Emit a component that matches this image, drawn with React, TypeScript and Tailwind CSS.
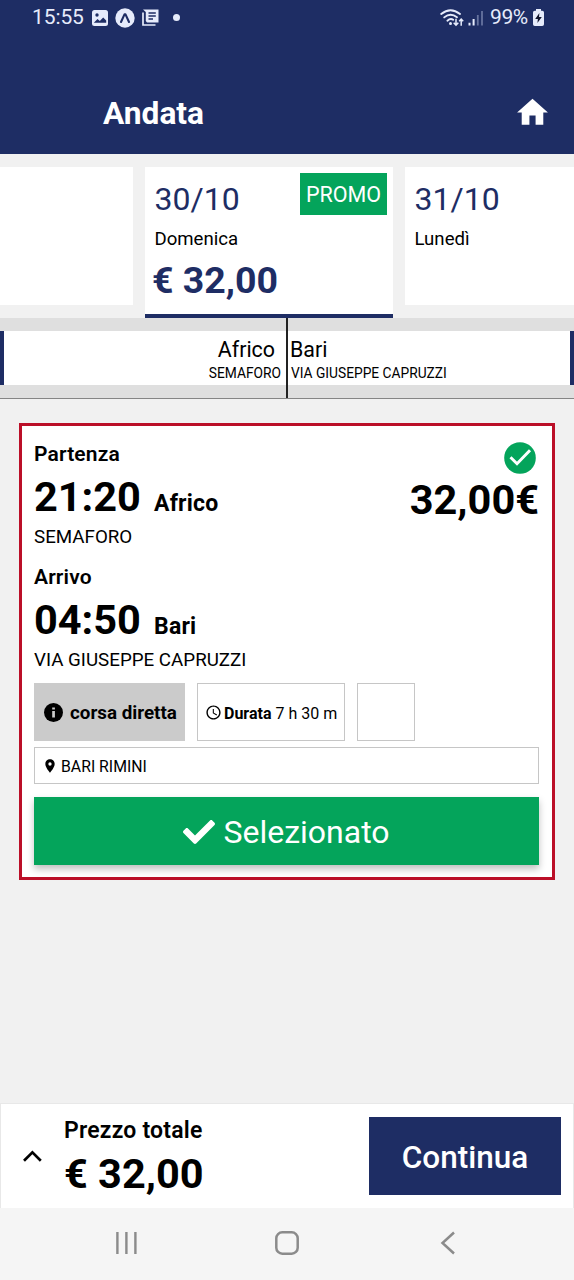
import type { ReactNode } from "react";
import { FaCheck } from "react-icons/fa";
import { MdAccessTime, MdHome, MdLocationOn } from "react-icons/md";

function StatusBar() {
  return (
    <div className="flex h-[35px] items-center pl-[32px] pr-[30px] text-[#e6ebfb]">
      <span className="w-[60px] text-[21px] leading-[35px] tracking-[-0.1px]">15:55</span>
      <svg className="h-[16px] w-[16px] shrink-0" viewBox="0 0 16 16">
        <rect width="16" height="16" rx="2.5" fill="currentColor" />
        <circle cx="5" cy="5" r="1.7" fill="#1e2d64" />
        <path d="M1.8 12.8 5.5 9l2.3 2 3.4-3.6 3 3.2v2.2z" fill="#1e2d64" />
      </svg>
      <svg className="ml-[7px] h-[20px] w-[20px] shrink-0" viewBox="0 0 20 20">
        <circle cx="10" cy="10" r="9.7" fill="currentColor" />
        <path d="M6 14 9.5 6.4h1L14 14" fill="none" stroke="#1e2d64" strokeWidth="2.1" strokeLinecap="round" strokeLinejoin="round" />
      </svg>
      <svg className="ml-[7px] h-[17px] w-[17px] shrink-0" viewBox="0 0 17 17">
        <path d="M1 3.5V16h12.5" fill="none" stroke="currentColor" strokeWidth="1.7" />
        <path d="M1 .5h15.5v13H5L3.8 12V3z" fill="currentColor" />
        <path d="M6.5 4h7.3M6.5 7h7.3M6.5 10h4.5" stroke="#1e2d64" strokeWidth="1.4" />
      </svg>
      <span className="ml-[14px] h-[7px] w-[7px] rounded-full bg-[#e6ebfb]" />
      <svg className="ml-auto h-[18px] w-[24px] shrink-0" viewBox="0 0 24 18">
        <g fill="none" stroke="currentColor" strokeWidth="1.9" strokeLinecap="round">
          <path d="M1.2 5Q10.5-2.6 20 5" />
          <path d="M4.2 8.4Q10.5 3 17 8.2" />
          <path d="M7.4 11.7Q10.5 9 13.2 10.8" />
        </g>
        <circle cx="10.5" cy="14.4" r="1.5" fill="currentColor" />
        <path d="M16 9.7V16m-2.3-2.2L16 16.2l2.3-2.4M21.2 16.7v-6.5m-2 2 2-2.2 2 2.2" fill="none" stroke="currentColor" strokeWidth="1.5" />
      </svg>
      <svg className="ml-[4px] h-[16px] w-[16px] shrink-0" viewBox="0 0 16 16">
        <path d="M1.5 15.5v-2.7M5.6 15.5V9" stroke="currentColor" strokeWidth="2" />
        <path d="M9.8 15.5V5M14 15.5V1" stroke="#66739f" strokeWidth="1.8" />
      </svg>
      <span className="ml-[6px] w-[41px] whitespace-nowrap text-[21px] leading-[35px] tracking-[-0.4px]">99%</span>
      <svg className="ml-[2px] h-[17px] w-[11px] shrink-0" viewBox="0 0 11 17">
        <path d="M3 0h5v1.8h1.3Q11 1.8 11 3.5v11.7q0 1.8-1.8 1.8H1.8Q0 17 0 15.2V3.5q0-1.7 1.7-1.7H3z" fill="currentColor" />
        <path d="M6.4 4 2.2 10h2.7l-.5 4 4.4-6H6z" fill="#10142b" />
      </svg>
    </div>
  );
}

function DayCard({ date, day, children, className }: { date: string; day: string; children?: ReactNode; className: string }) {
  return (
    <div className={`shrink-0 bg-white whitespace-nowrap ${className}`}>
      <div className="h-[48px] pt-[12px] text-[32px] leading-[40px] text-[#1e2d64]">{date}</div>
      <div className="mt-[12px] text-[18.6px] leading-[24px]">{day}</div>
      {children}
    </div>
  );
}

function Stop({ label, time, city, place }: { label: string; time: string; city: string; place: string }) {
  return (
    <div className="h-[123px] whitespace-nowrap">
      <div className="text-[21px] leading-[24px] font-semibold tracking-[0.15px]">{label}</div>
      <div className="mt-[6px] flex items-baseline">
        <span className="w-[120px] text-[41.5px] leading-[50px] font-bold">{time}</span>
        <span className="text-[23px] font-bold tracking-[0.2px]">{city}</span>
      </div>
      <div className="mt-[3px] text-[18.75px] leading-[25px]">{place}</div>
    </div>
  );
}

export default function App() {
  return (
    <div className="flex h-[1280px] w-[574px] flex-col overflow-hidden bg-[#f1f1f1] font-['Roboto',sans-serif] text-black">
      <header className="h-[154px] shrink-0 bg-[#1e2d64]">
        <StatusBar />
        <div className="mt-[53px] flex h-[50px] items-center justify-between pr-[23px] pl-[103px]">
          <h1 className="pt-[2px] text-[31.7px] leading-[50px] font-bold text-white">Andata</h1>
          <MdHome className="mb-[2px] h-[37px] w-[37px] text-white" />
        </div>
      </header>

      <section className="flex h-[164px] shrink-0 items-start gap-[12px] overflow-hidden pt-[13px]">
        <div className="h-[138px] w-[133px] shrink-0 bg-white" />
        <div className="relative shrink-0">
          <DayCard date="30/10" day="Domenica" className="h-[151px] w-[248px] border-b-[4px] border-[#1e2d64] pl-[9.5px]">
            <div className="-ml-[2.5px] mt-[6px] text-[37.5px] leading-[46px] font-bold text-[#1e2d64]">€ 32,00</div>
          </DayCard>
          <span className="absolute top-[6px] right-[6px] h-[42px] w-[87px] bg-[#04a45b] text-center text-[21.5px] leading-[43px] text-white">
            PROMO
          </span>
        </div>
        <DayCard date="31/10" day="Lunedì" className="h-[138px] w-[248px] pl-[9.5px]" />
      </section>

      <section className="flex h-[81px] shrink-0 border-b border-[#858585] bg-[#dfdfdf] whitespace-nowrap">
        <div className="flex w-[288px] border-r-2 border-[#222] py-[13px]">
          <div className="flex-1 border-l-[4px] border-[#1e2d64] bg-white pt-[6px] text-right">
            <div className="pr-[11px] text-[21.4px] leading-[26px]">Africo</div>
            <div className="pr-[5px] text-[13.8px] leading-[20px]">SEMAFORO</div>
          </div>
        </div>
        <div className="flex flex-1 py-[13px]">
          <div className="flex-1 border-r-[4px] border-[#1e2d64] bg-white pt-[6px] pl-[2px]">
            <div className="text-[21.4px] leading-[26px]">Bari</div>
            <div className="pl-px text-[13.75px] leading-[20px]">VIA GIUSEPPE CAPRUZZI</div>
          </div>
        </div>
      </section>

      <main className="mx-[19px] mt-[24px] h-[457px] shrink-0 border-[3px] border-[#bb0f28] bg-white px-[12px] pt-[16px] pr-[13px]">
        <div className="flex justify-between">
          <div>
            <Stop label="Partenza" time="21:20" city="Africo" place="SEMAFORO" />
            <Stop label="Arrivo" time="04:50" city="Bari" place="VIA GIUSEPPE CAPRUZZI" />
          </div>
          <div className="-mt-[0.5px] flex flex-col items-end">
            <svg className="mr-[3px] h-[32px] w-[32px]" viewBox="0 0 32 32">
              <circle cx="16" cy="16" r="15.8" fill="#04a45b" />
              <path d="m6.5 15.3 6.5 6.4L26 8.3" fill="none" stroke="white" strokeWidth="3" />
            </svg>
            <span className="mt-px text-[41.5px] leading-[50px] font-bold">32,00€</span>
          </div>
        </div>
        <div className="-mt-[5px] flex h-[58px] gap-[12px] whitespace-nowrap">
          <div className="flex w-[151px] items-center bg-[#cbcbcb] pl-[10px] text-[18.8px] font-bold">
            <svg className="h-[19px] w-[19px] shrink-0" viewBox="0 0 19 19">
              <circle cx="9.5" cy="9.5" r="9.5" fill="black" />
              <path d="M8.2 4.4h2.7v2.2H8.2zM8.2 8h2.7v6.6H8.2z" fill="#cbcbcb" />
            </svg>
            <span className="ml-[7px] pt-[3px]">corsa diretta</span>
          </div>
          <div className="flex w-[148px] items-center border border-[#c6c6c6] pl-[7px] text-[16px]">
            <MdAccessTime className="mr-[2px] h-[17px] w-[17px] shrink-0" />
            <span className="pt-[3px]">
              <b>Durata</b> 7 h 30 m
            </span>
          </div>
          <div className="w-[58px] border border-[#c6c6c6]" />
        </div>
        <div className="mt-[6px] flex h-[37px] items-center border border-[#c6c6c6] pl-[7px] text-[15.8px]">
          <MdLocationOn className="mr-[3px] h-[16px] w-[16px]" />
          <span className="pt-[3px]">BARI RIMINI</span>
        </div>
        <button className="mt-[13px] flex h-[68px] w-full items-center justify-center gap-[8px] bg-[#04a45b] text-[32px] leading-[68px] text-white shadow-[0_4px_7px_rgba(0,0,0,0.25)]">
          <FaCheck className="mt-px h-[32px] w-[32px]" />
          <span className="pt-px">Selezionato</span>
        </button>
      </main>

      <footer className="mt-auto flex h-[105px] shrink-0 border border-b-0 border-[#e8e8e8] bg-white pr-[12px]">
        <svg className="mt-[46px] ml-[22px] h-[12px] w-[19px]" viewBox="0 0 19 12">
          <path d="m1 10.7 8.4-8.4 8.4 8.4" fill="none" stroke="black" strokeWidth="2.7" />
        </svg>
        <div className="ml-[22px] whitespace-nowrap">
          <div className="mt-[14px] text-[23px] leading-[26px] font-semibold tracking-[0.2px]">Prezzo totale</div>
          <div className="mt-[5px] text-[41.5px] leading-[50px] font-bold">€ 32,00</div>
        </div>
        <button className="mt-[13px] ml-auto h-[78px] w-[192px] bg-[#1e2d64] text-[31.5px] leading-[82px] font-medium text-white">
          Continua
        </button>
      </footer>

      <nav className="flex h-[72px] shrink-0 items-center justify-between bg-[#f5f5f5] px-[115px] pb-[2px] text-[#8b8b8b]">
        <svg className="h-[24px] w-[23px]" viewBox="0 0 23 24">
          <path d="M2.4 1v22M11.4 1v22M20.4 1v22" stroke="currentColor" strokeWidth="2.4" />
        </svg>
        <svg className="-ml-[4px] h-[24px] w-[24px]" viewBox="0 0 24 24">
          <rect x="1.3" y="1.3" width="21.4" height="21.4" rx="6" fill="none" stroke="currentColor" strokeWidth="2.5" />
        </svg>
        <svg className="mr-[3px] h-[24px] w-[16px]" viewBox="0 0 16 24">
          <path d="M14 1.5 2.5 12 14 22.5" fill="none" stroke="currentColor" strokeWidth="2.5" />
        </svg>
      </nav>
    </div>
  );
}
